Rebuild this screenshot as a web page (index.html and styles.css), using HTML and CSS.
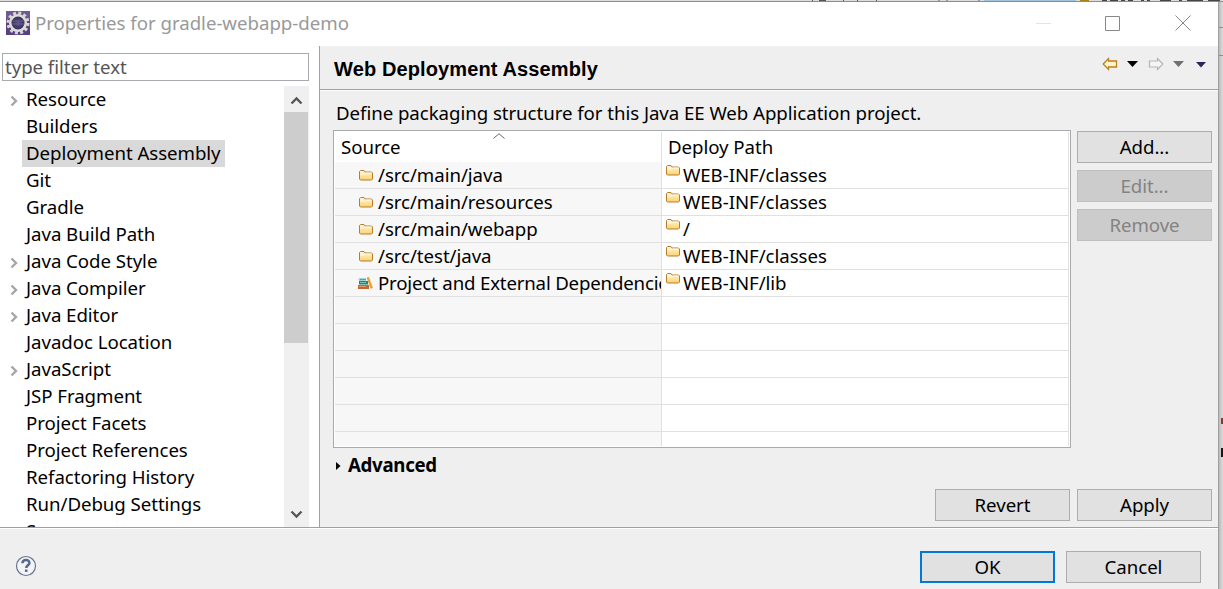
FILE: index.html
```html
<!DOCTYPE html>
<html lang="en">
<head>
<meta charset="utf-8">
<title>Properties for gradle-webapp-demo</title>
<link rel="stylesheet" href="styles.css">
</head>
<body>
<svg width="0" height="0" class="defs">
  <defs>
    <linearGradient id="gold" x1="0" y1="0" x2="0" y2="1"><stop offset="0" stop-color="#fff8df"/><stop offset="1" stop-color="#fbd16b"/></linearGradient>
    <radialGradient id="lens"><stop offset="0" stop-color="#5c5285"/><stop offset="1" stop-color="#2f2556"/></radialGradient>
    <symbol id="folder" viewBox="0 0 14 12"><path d="M.5 10V2.500l1-1h3.500l1 1.500h6.500l1 1V10l-1 1h-11z" fill="url(#gold)" stroke="#b97c2c"/><path d="M1.500 5h4l1-1h6" fill="none" stroke="#fffbe9"/></symbol>
    <symbol id="expand" viewBox="0 0 8 12"><path d="M1.500 1.500 6 6l-4.500 4.500" fill="none" stroke="#a6a6a6" stroke-width="2.400"/></symbol>
  </defs>
</svg>
<div class="backdrop"><svg width="1223" height="2"><path d="M812.500 0v1M939 0v1M947 0v1M979 0v1" stroke="#555"/><path d="M819 .5h7m17 0h1m13 0h1m18 0h1" stroke="#555"/><path d="M984 .5h92" stroke="#a2c4df"/><path d="M1080 .5h9" stroke="#a6821e"/><path d="M1102 .5h5m3 0h8m3 0h4m3 0h5m8 0h3m3 0h3m10 0h11m8 0h3m5 0h16m5 0h12" stroke="#444"/></svg></div>
<div class="desk">
<main class="window">
  <header class="titlebar">
    <svg class="logo" width="24" height="24" viewBox="0 0 24 24"><rect width="24" height="24" fill="#58417f"/><path d="M0 0h24v8H0z" fill="#6d5a91"/><circle cx="12" cy="12" r="10" fill="none" stroke="#d9d7d0" stroke-width="3" stroke-dasharray="2.900 2.336"/><circle cx="12" cy="12" r="7.800" fill="url(#lens)" stroke="#dedcd6" stroke-width="2.600"/><path d="M5.500 10h13M6 13h12" stroke="#776d9c" stroke-width=".7"/></svg>
    <h1>Properties for gradle-webapp-demo</h1>
    <div class="controls">
      <svg width="15" height="16"><path d="M0 8.500h15" stroke="#e4e4e4"/></svg>
      <svg width="15" height="16"><path d="M.5 1.500h14v14H.5z" fill="none" stroke="#888"/></svg>
      <svg width="16" height="16"><path d="m.5.500 15 15m0-15-15 15" stroke="#888"/></svg>
    </div>
  </header>
  <div class="body">
    <aside>
      <div class="filter">type filter text</div>
      <div class="treewrap">
        <ul class="tree">
          <li><svg><use href="#expand"/></svg><span>Resource</span></li>
          <li><span>Builders</span></li>
          <li class="on"><span>Deployment Assembly</span></li>
          <li><span>Git</span></li>
          <li><span>Gradle</span></li>
          <li><span>Java Build Path</span></li>
          <li><svg><use href="#expand"/></svg><span>Java Code Style</span></li>
          <li><svg><use href="#expand"/></svg><span>Java Compiler</span></li>
          <li><svg><use href="#expand"/></svg><span>Java Editor</span></li>
          <li><span>Javadoc Location</span></li>
          <li><svg><use href="#expand"/></svg><span>JavaScript</span></li>
          <li><span>JSP Fragment</span></li>
          <li><span>Project Facets</span></li>
          <li><span>Project References</span></li>
          <li><span>Refactoring History</span></li>
          <li><span>Run/Debug Settings</span></li>
          <li><span>Server</span></li>
        </ul>
        <div class="scroll">
          <svg width="25" height="26"><path d="m7.500 17.500 5-5 5 5" fill="none" stroke="#555" stroke-width="2.300"/></svg>
          <div class="thumb"></div>
          <svg width="25" height="26"><path d="m7.500 10.500 5 5 5-5" fill="none" stroke="#555" stroke-width="2.300"/></svg>
        </div>
      </div>
    </aside>
    <section class="page">
      <div class="pagehead">
        <h2>Web Deployment Assembly</h2>
        <svg class="nav" width="106" height="16" viewBox="0 0 106 16">
          <path d="M1.200 8 6.500 2.500V5H14.500v6H6.500v2.500z" fill="#fff6cc" stroke="#bd7f1c" stroke-width="1.300"/>
          <path d="M25 5h11l-5.500 6z" fill="#000"/>
          <path d="M60.800 8 55.500 2.500V5H47.500v6h8v2.500z" fill="#f5f5f5" stroke="#b5b5b5" stroke-width="1.200"/>
          <path d="M71 5h11l-5.500 6z" fill="#707070"/>
          <path d="M94 6h10l-5 5.500z" fill="#33215a"/>
        </svg>
      </div>
      <div class="content">
        <p class="desc">Define packaging structure for this Java EE Web Application project.</p>
        <div class="split">
          <div class="table">
            <div class="row head"><div>Source<svg class="sort" width="12" height="6"><path d="M.5 5.500 6 .7l5.500 4.800" fill="none" stroke="#666"/></svg></div><div>Deploy Path</div></div>
            <div class="row"><div><svg><use href="#folder"/></svg><span>/src/main/java</span></div><div><svg><use href="#folder"/></svg><span>WEB-INF/classes</span></div></div>
            <div class="row"><div><svg><use href="#folder"/></svg><span>/src/main/resources</span></div><div><svg><use href="#folder"/></svg><span>WEB-INF/classes</span></div></div>
            <div class="row"><div><svg><use href="#folder"/></svg><span>/src/main/webapp</span></div><div><svg><use href="#folder"/></svg><span>/</span></div></div>
            <div class="row"><div><svg><use href="#folder"/></svg><span>/src/test/java</span></div><div><svg><use href="#folder"/></svg><span>WEB-INF/classes</span></div></div>
            <div class="row"><div><svg class="books" viewBox="0 0 15 12"><path d="M1 1.500h7v2H1z" fill="#49a8bd"/><path d="M0 2h2v1H0z" fill="#a5dce8"/><path d="M1 4h9v3.500H1z" fill="#238676"/><path d="M2 5h6v1H2z" fill="#74c5ad"/><path d="M0 8h11v4H0z" fill="#bf6736"/><path d="M1 9h7v1H1z" fill="#e19b68"/><path d="m8.500.500 2.500-.5 4 11-2.500.700z" fill="#e6a535"/></svg><span class="deps">Project and External Dependencies</span></div><div><svg><use href="#folder"/></svg><span>WEB-INF/lib</span></div></div>
            <div class="row"><div></div><div></div></div><div class="row"><div></div><div></div></div><div class="row"><div></div><div></div></div><div class="row"><div></div><div></div></div><div class="row"><div></div><div></div></div><div class="row"><div></div><div></div></div>
          </div>
          <div class="side"><button>Add...</button><button disabled>Edit...</button><button disabled>Remove</button></div>
        </div>
        <div class="advanced"><svg width="5" height="8"><path d="m0 0 4.500 4L0 8z"/></svg><b>Advanced</b></div>
        <div class="actions"><button>Revert</button><button>Apply</button></div>
      </div>
    </section>
  </div>
  <footer>
    <svg class="help" width="22" height="22" viewBox="0 0 22 22"><circle cx="11" cy="11" r="9.500" fill="#f3f4f7" stroke="#67758f" stroke-width="1.200"/><path d="M7.400 8.300C7.600 3.900 14.500 4.100 14.400 7.900c0 2.300-3.200 2.500-3.200 5.200" fill="none" stroke="#56688f" stroke-width="2.500"/><path d="M9.900 14.500h2.600v2.400H9.900z" fill="#56688f"/></svg>
    <div class="final"><button class="ok">OK</button><button>Cancel</button></div>
  </footer>
</main>
<div class="edge"><i class="e1"></i><i class="e2"></i><i class="e3"></i><i class="e4"></i></div>
</div>
</body>
</html>
```
FILE: styles.css
```css
* { box-sizing: border-box; }
body { margin: 0; width: 1223px; height: 589px; overflow: hidden; background: #d5d5d5; color: #000; font: 18.67px/25px "Noto Sans", sans-serif; letter-spacing: -0.05px; }
.defs { position: absolute; }
h1, h2, p, ul { margin: 0; padding: 0; }
.backdrop { height: 2px; background: #ddd; border-bottom: 1px solid #8d8d8d; }
.backdrop svg { display: block; height: 1px; }
.desk { display: flex; height: 587px; }
.window { width: 1219px; border-right: 1px solid #a0a0a0; display: flex; flex-direction: column; background: #efefef; }
.titlebar { height: 44px; background: #fff; display: flex; align-items: center; padding: 0 27px 2px 6px; }
.logo { flex: none; }
h1 { font-size: 18.67px; font-weight: 400; color: #999; margin-left: 5px; padding-bottom: 2px; letter-spacing: -0.02px; }
.controls { margin-left: auto; display: flex; gap: 55px; }
.controls svg:first-child { margin-right: -1px; }
.body { height: 482px; display: flex; border-bottom: 1px solid #a0a0a0; }
aside { width: 320px; background: #fff; border-right: 1px solid #a0a0a0; padding: 7px 10px 0 0; display: flex; flex-direction: column; }
.filter { height: 28px; margin-left: 2px; border: 1px solid #a9a9b0; padding: 0 2px; color: #555; }
.treewrap { display: flex; justify-content: space-between; margin-top: 5px; height: 441px; overflow: hidden; }
.tree { list-style: none; }
.tree li { height: 27px; padding-left: 22px; display: flex; position: relative; }
.tree svg { position: absolute; left: 10px; top: 9px; width: 8px; height: 12px; }
.tree span { padding: 0 4px; white-space: nowrap; }
.on span { background: #d9d9d9; }
.scroll { width: 25px; background: #f0f0f0; display: flex; flex-direction: column; }
.thumb { width: 24px; height: 231px; background: #cdcdcd; margin-bottom: auto; }
.page { flex: 1; display: flex; flex-direction: column; }
.pagehead { height: 44px; border-bottom: 1px solid #a0a0a0; box-shadow: 0 1px #fff; display: flex; justify-content: space-between; padding: 9px 10px 0 14px; }
h2 { font: bold 20px/29px "Liberation Sans", sans-serif; letter-spacing: 0.12px; }
.nav { margin-top: 1px; }
.content { padding: 10px 6px 0 13px; }
.desc { height: 27px; padding-left: 3px; white-space: nowrap; }
.split { display: flex; gap: 6px; margin-top: 3px; }
.table { width: 738px; height: 318px; border: 1px solid #a9a9ae; padding: 1px; background: #fff; overflow: clip; overflow-clip-margin: content-box; }
.row { height: 27px; display: grid; grid-template-columns: 327px 407px; }
.row > div { display: flex; border-right: 1px solid #e0e0e0; border-bottom: 1px solid #e0e0e0; overflow: hidden; white-space: nowrap; }
.row > div:first-child { background: #f7f7f7; padding-left: 24px; }
.row > div:last-child { padding-left: 4px; }
.row svg { flex: none; width: 14px; height: 12px; margin-top: 7px; }
.row > div:last-child svg { margin-top: 2px; }
.row span { margin-left: 5px; }
.row > div:last-child span { margin-left: 3px; }
.row .deps { letter-spacing: -0.18px; }
.row.head { height: 30px; line-height: 29px; }
.row.head > div { border-bottom: 0; position: relative; }
.row.head > div:first-child { padding-left: 6px; background: #fff; }
.row.head > div:last-child { padding-left: 6px; }
.row svg.sort { position: absolute; left: 158px; top: 1px; width: 12px; height: 6px; margin: 0; }
.row svg.books { margin-left: -1px; width: 15px; }
button { width: 135px; height: 32px; padding: 0 0 2px; border: 1px solid #adadad; background: #e1e1e1; color: #000; font: inherit; letter-spacing: inherit; }
button:disabled { background: #ccc; border-color: #bfbfbf; color: #838383; }
.side { display: flex; flex-direction: column; gap: 7px; padding-top: 1px; }
.advanced { display: flex; align-items: center; gap: 7px; padding-left: 3px; margin-top: 4px; height: 27px; }
.advanced b { letter-spacing: -0.3px; padding-bottom: 2px; }
.actions { display: flex; justify-content: flex-end; gap: 7px; margin-top: 10px; }
footer { flex: 1; border-top: 1px solid #fff; display: flex; justify-content: space-between; padding: 22px 17px 0 15px; }
.help { margin-top: 4px; }
.final { display: flex; gap: 11px; }
.ok { border: 2px solid #0078d7; }
.edge { flex: 1; display: flex; flex-direction: column; align-items: flex-end; background: linear-gradient(90deg, #bbb, #ddd); }
.edge i { width: 4px; height: 1px; background: #8b8b8b; }
.edge .e1 { margin-top: 25px; }
.edge .e2 { margin-top: 27px; }
.edge .e3 { margin-top: 362px; width: 2px; height: 6px; background: #813e30; }
.edge .e4 { margin-top: 24px; width: 2px; height: 9px; background: #181818; }
```
